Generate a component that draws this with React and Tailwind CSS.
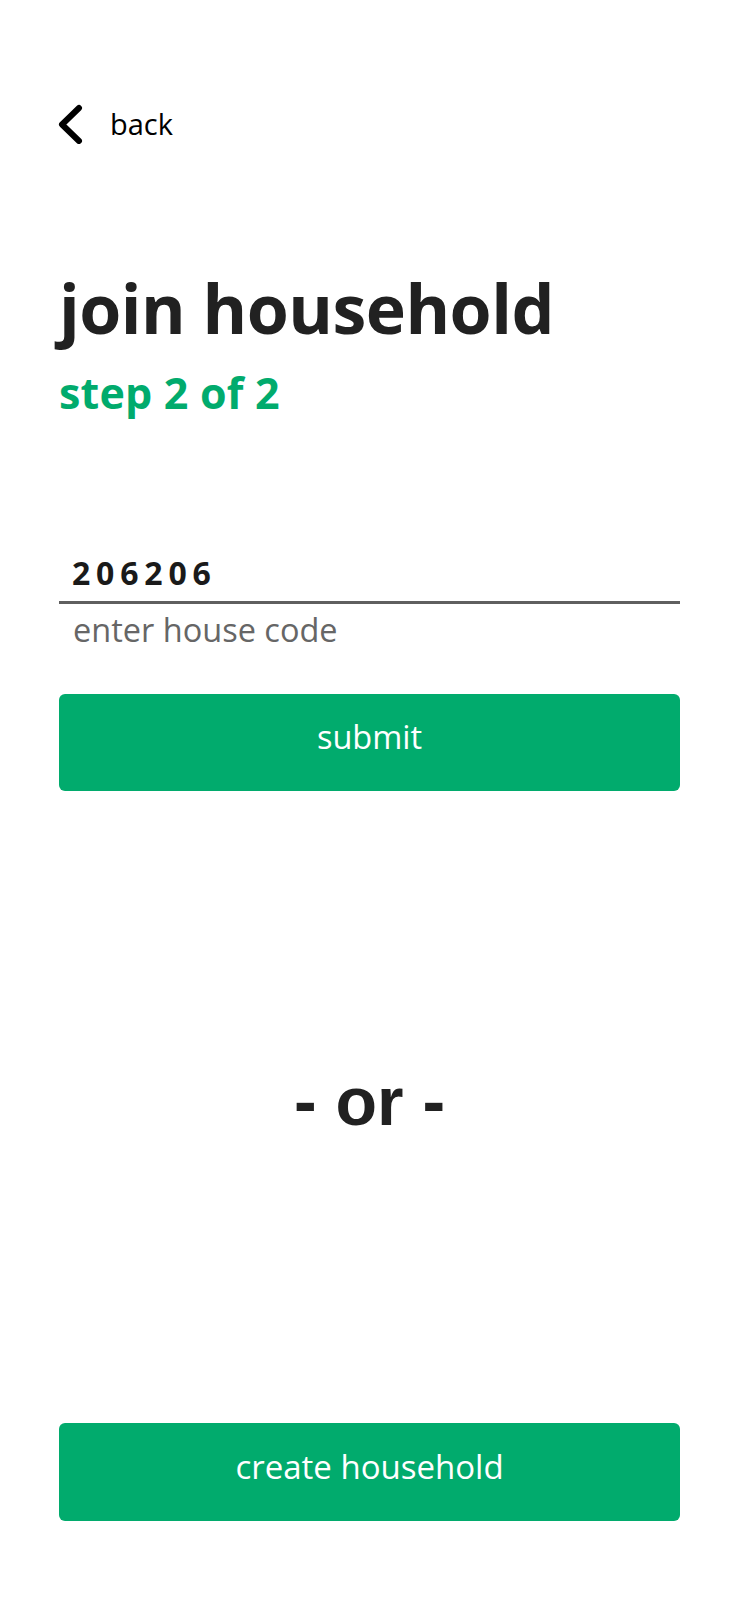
import React from "react";

export default function App() {
  return (
    <div
      className="min-h-[1600px] w-full bg-white px-[59px] pt-[104px]"
      style={{ fontFamily: '"Open Sans", "Noto Sans", sans-serif' }}
    >
      <div className="flex h-[40px] items-center">
        <svg width="30" height="40" viewBox="0 0 30 40" className="-ml-[3px] shrink-0">
          <polyline
            points="23,4 6,20.5 23,37"
            fill="none"
            stroke="#000"
            strokeWidth="6"
            strokeLinecap="round"
            strokeLinejoin="round"
          />
        </svg>
        <span className="ml-[24px] text-[29px] leading-[40px] text-black">back</span>
      </div>

      <h1 className="mt-[130px] text-[68px] font-bold leading-[68px] tracking-[-0.5px] text-[#212121]">
        join household
      </h1>
      <h2 className="mt-[26px] text-[43px] font-bold leading-[50px] tracking-[0.2px] text-[#01ab6d]">
        step 2 of 2
      </h2>

      <div className="mt-[135px] border-b-[3px] border-[#5f5f5f] pb-[8px] pl-[13px]">
        <div className="text-[32px] font-bold leading-[40px] tracking-[5.8px] text-[#1a1a1a]">
          206206
        </div>
      </div>
      <div className="mt-[6px] pl-[14px] text-[32.5px] leading-[40px] text-[#666666]">
        enter house code
      </div>

      <button className="mt-[44px] flex h-[97px] w-full items-center justify-center rounded-md bg-[#01ab6d] pb-[10px] text-[32.5px] text-white">
        submit
      </button>

      <div
        className="mt-[270px] text-center text-[68px] font-bold leading-[80px] text-[#212121]"
        style={{ fontFamily: '"Liberation Sans", Arial, sans-serif' }}
      >
        - or -
      </div>

      <button className="mt-[282px] flex h-[98px] w-full items-center justify-center rounded-md bg-[#01ab6d] pb-[11px] text-[33px] text-white">
        create household
      </button>
    </div>
  );
}
